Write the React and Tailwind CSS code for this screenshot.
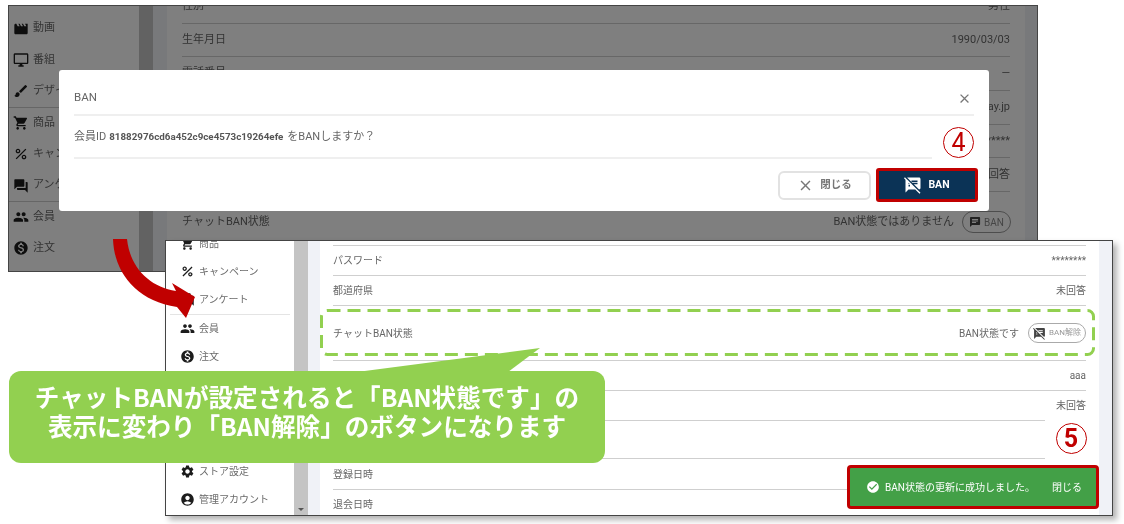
import React from "react";
import {
  MdMovie, MdOutlineDesktopWindows, MdBrush, MdShoppingCart, MdPercent, MdQuestionAnswer, MdPeople,
  MdMonetizationOn, MdSettings, MdAccountCircle, MdCheckCircle, MdClose, MdChat, MdSpeakerNotesOff,
} from "react-icons/md";

function NavItem({ icon: Icon, label, h, size, text, gap }) {
  return (
    <div className={`flex items-center shrink-0 ${h} ${gap}`}>
      <Icon className={`${size} text-[#1c1c1c] shrink-0`} />
      <span className={`${text} text-[#6a6a6a] whitespace-nowrap`}>{label}</span>
    </div>
  );
}

function Row({ h, label, value, text, children }) {
  return (
    <div className={`flex items-center justify-between shrink-0 border-b border-[#cfcfcf] ${h} ${text} text-[#666]`}>
      <span>{label}</span>
      {children ? children : <span>{value}</span>}
    </div>
  );
}

function WindowOne() {
  const item = { h: "h-[31.4px]", size: "w-[16px] h-[16px]", text: "text-[11px]", gap: "gap-[4px]" };
  const row = { h: "h-[33.7px]", text: "text-[11px]" };
  return (
    <div className="absolute left-[8px] top-[5px] w-[1030px] h-[267px] border border-[#444] bg-white flex overflow-hidden">
      <div className="w-[130px] shrink-0 flex flex-col pl-[4px] pt-[7px]">
        <NavItem icon={MdMovie} label="動画" {...item} />
        <NavItem icon={MdOutlineDesktopWindows} label="番組" {...item} />
        <NavItem icon={MdBrush} label="デザイン" {...item} />
        <div className="h-0 border-t border-[#ccc] -ml-[4px] -mb-[1px]" />
        <NavItem icon={MdShoppingCart} label="商品" {...item} />
        <NavItem icon={MdPercent} label="キャンペーン" {...item} />
        <NavItem icon={MdQuestionAnswer} label="アンケート" {...item} />
        <div className="h-0 border-t border-[#ccc] -ml-[4px] -mb-[1px]" />
        <NavItem icon={MdPeople} label="会員" {...item} />
        <NavItem icon={MdMonetizationOn} label="注文" {...item} />
      </div>
      <div className="w-[14px] shrink-0 bg-[#c4c4c4]" />
      <div className="w-[14px] shrink-0 bg-[#f0f2f7]" />
      <div className="flex-1 min-w-0 flex flex-col px-[15px] -mt-[16px]">
        <Row {...row} label="性別" value="男性" />
        <Row {...row} label="生年月日" value="1990/03/03" />
        <Row {...row} label="電話番号" value="—" />
        <Row {...row} label="メールアドレス" value="ay.jp" />
        <Row {...row} label="パスワード" value="********" />
        <Row {...row} label="都道府県" value="未回答" />
        <div className="flex items-center justify-between h-[60px] text-[11px] text-[#666]">
          <span>チャットBAN状態</span>
          <div className="flex items-center gap-[8px] -mr-[1px]">
            <span>BAN状態ではありません</span>
            <div className="flex items-center gap-[3px] h-[22px] w-[49px] px-[6px] rounded-full border border-[#9a9a9a] text-[10px] text-[#8a8a8a]">
              <MdChat className="w-[14px] h-[14px] text-[#444]" />
              <span>BAN</span>
            </div>
          </div>
        </div>
      </div>
      <div className="w-[12px] shrink-0 bg-[#f0f2f7]" />
      <div className="absolute inset-0 bg-black/50" />
    </div>
  );
}

function Modal() {
  return (
    <div className="absolute left-[59px] top-[70px] w-[930px] h-[141px] bg-white rounded-[3px] px-[15px] flex flex-col">
      <div className="flex items-center justify-between h-[46px] pt-[12px] border-b-2 border-[#efefef] text-[#666] text-[11.5px]">
        <span>BAN</span>
        <MdClose className="w-[15px] h-[15px] text-[#777] mr-[2px]" />
      </div>
      <div className="flex items-center h-[43px] pt-[1px] border-b-2 border-[#efefef] text-[11px] text-[#666]">
        <span>会員ID</span>
        <span className="font-bold text-[9.8px] ml-[3px] mr-[4px] text-[#555]">81882976cd6a452c9ce4573c19264efe</span>
        <span>をBANしますか？</span>
      </div>
      <div className="flex justify-end items-center gap-[5px] flex-1 -mr-[4px]">
        <div className="w-[93px] h-[29px] flex items-center justify-center gap-[6px] bg-white border-2 border-[#e2e2e2] rounded-[6px] text-[#777] text-[10.5px] font-bold">
          <MdClose className="w-[17px] h-[17px]" />
          <span>閉じる</span>
        </div>
        <div className="w-[102px] h-[34px] border-[3px] border-[#c00000] rounded-[3px] bg-[#0b3356] flex items-center justify-center gap-[6px] text-white text-[10.5px] font-bold">
          <MdSpeakerNotesOff className="w-[18px] h-[18px]" />
          <span>BAN</span>
        </div>
      </div>
      <div className="absolute left-[873px] top-[52px] w-[53px] h-[43px] bg-white flex items-start justify-center pt-[5px]">
        <div className="w-[31px] h-[31px] rounded-full border border-[#c00000] flex items-center justify-center text-[#c00000] text-[25px] leading-none">4</div>
      </div>
    </div>
  );
}

function WindowTwo() {
  const item = { h: "h-[28.4px]", size: "w-[15px] h-[15px]", text: "text-[10px]", gap: "gap-[4px]" };
  const t = "text-[10px]";
  return (
    <div className="absolute left-[165px] top-[240px] w-[948px] h-[276px] border-[1.5px] border-[#444] bg-white flex overflow-hidden shadow-[4px_4px_6px_rgba(0,0,0,0.3)]">
      <div className="w-[128px] shrink-0 flex flex-col pl-[14px] -mt-[12px]">
        <NavItem icon={MdShoppingCart} label="商品" {...item} />
        <NavItem icon={MdPercent} label="キャンペーン" {...item} />
        <NavItem icon={MdQuestionAnswer} label="アンケート" {...item} />
        <div className="h-0 border-t border-[#e4e4e4] -ml-[10px] mr-[4px] -mb-[1px]" />
        <NavItem icon={MdPeople} label="会員" {...item} />
        <NavItem icon={MdMonetizationOn} label="注文" {...item} />
        <div className="h-[86px] shrink-0" />
        <NavItem icon={MdSettings} label="ストア設定" {...item} />
        <NavItem icon={MdAccountCircle} label="管理アカウント" {...item} />
      </div>
      <div className="w-[14px] shrink-0 bg-[#c4c4c4] flex items-end justify-center pb-[4px]">
        <div className="w-0 h-0 border-l-[3px] border-r-[3px] border-t-[3px] border-l-transparent border-r-transparent border-t-[#555]" />
      </div>
      <div className="w-[12px] shrink-0 bg-[#f0f2f7]" />
      <div className="flex-1 min-w-0 flex flex-col px-[13px]">
        <Row h="h-[5px]" text={t} />
        <Row h="h-[30px]" text={t} label="パスワード" value="********" />
        <Row h="h-[30px]" text={t} label="都道府県" value="未回答" />
        <Row h="h-[55px]" text={t} label="チャットBAN状態">
          <div className="flex items-center gap-[9px]">
            <span>BAN状態です</span>
            <div className="flex items-center gap-[3px] h-[20px] w-[58px] px-[4px] rounded-full border border-[#aaa] text-[8px] text-[#999] whitespace-nowrap">
              <MdSpeakerNotesOff className="w-[13px] h-[13px] text-[#444] shrink-0" />
              <span>BAN解除</span>
            </div>
          </div>
        </Row>
        <Row h="h-[30px]" text={t}>
          <span className="ml-auto">aaa</span>
        </Row>
        <Row h="h-[30px]" text={t}>
          <span className="ml-auto">未回答</span>
        </Row>
        <Row h="h-[38px]" text={t} />
        <Row h="h-[31px]" text={t} label="登録日時" value="" />
        <Row h="h-[30px]" text={t} label="退会日時" value="" />
      </div>
      <div className="w-[13px] shrink-0 bg-[#f0f2f7]" />
    </div>
  );
}

function Arrow() {
  return (
    <svg className="absolute left-0 top-0" width="1124" height="524" viewBox="0 0 1124 524" fill="none">
      <path
        d="M113 239 C114 272 136 301 177 307 L186 318 L195 297 L172 283 L176 291 C150 287 130 268 127 239 Z"
        fill="#c00000"
      />
    </svg>
  );
}

function Callout() {
  return (
    <>
      <svg className="absolute left-0 top-0" width="1124" height="524" viewBox="0 0 1124 524" fill="none">
        <rect x="321.5" y="310.5" width="772" height="44" rx="6" stroke="#92d050" strokeWidth="3" strokeDasharray="13 7" />
        <polygon points="540,348 357,372 508,372" fill="#92d050" />
      </svg>
      <div className="absolute left-[9px] top-[371px] w-[596px] h-[92px] bg-[#92d050] rounded-[12px] flex flex-col items-center pt-[11px] text-white font-bold text-[24.6px] leading-[29px] whitespace-nowrap font-['Noto_Sans_CJK_JP',sans-serif]">
        <span>チャットBANが設定されると「BAN状態です」の</span>
        <span>表示に変わり「BAN解除」のボタンになります</span>
      </div>
    </>
  );
}

function Toast() {
  return (
    <>
      <div className="absolute left-[1045px] top-[412px] w-[52px] h-[47px] bg-white flex items-center justify-center pt-[5px]">
        <div className="w-[31px] h-[31px] rounded-full border border-[#c00000] flex items-center justify-center text-[#c00000] text-[25px] font-bold leading-none">5</div>
      </div>
      <div className="absolute left-[847px] top-[465px] w-[252px] h-[44px] border-[3px] border-[#c00000] rounded-[4px] bg-[#43a047] flex items-center pl-[16px] pr-[14px] text-white text-[10px]">
        <MdCheckCircle className="w-[14px] h-[14px] mr-[5px] shrink-0" />
        <span>BAN状態の更新に成功しました。</span>
        <span className="ml-auto">閉じる</span>
      </div>
    </>
  );
}

export default function App() {
  return (
    <div className="relative w-[1124px] h-[524px] bg-white overflow-hidden blur-[0.4px] font-['Roboto','Noto_Sans_CJK_JP',sans-serif]">
      <WindowOne />
      <Modal />
      <WindowTwo />
      <Arrow />
      <Callout />
      <Toast />
    </div>
  );
}
